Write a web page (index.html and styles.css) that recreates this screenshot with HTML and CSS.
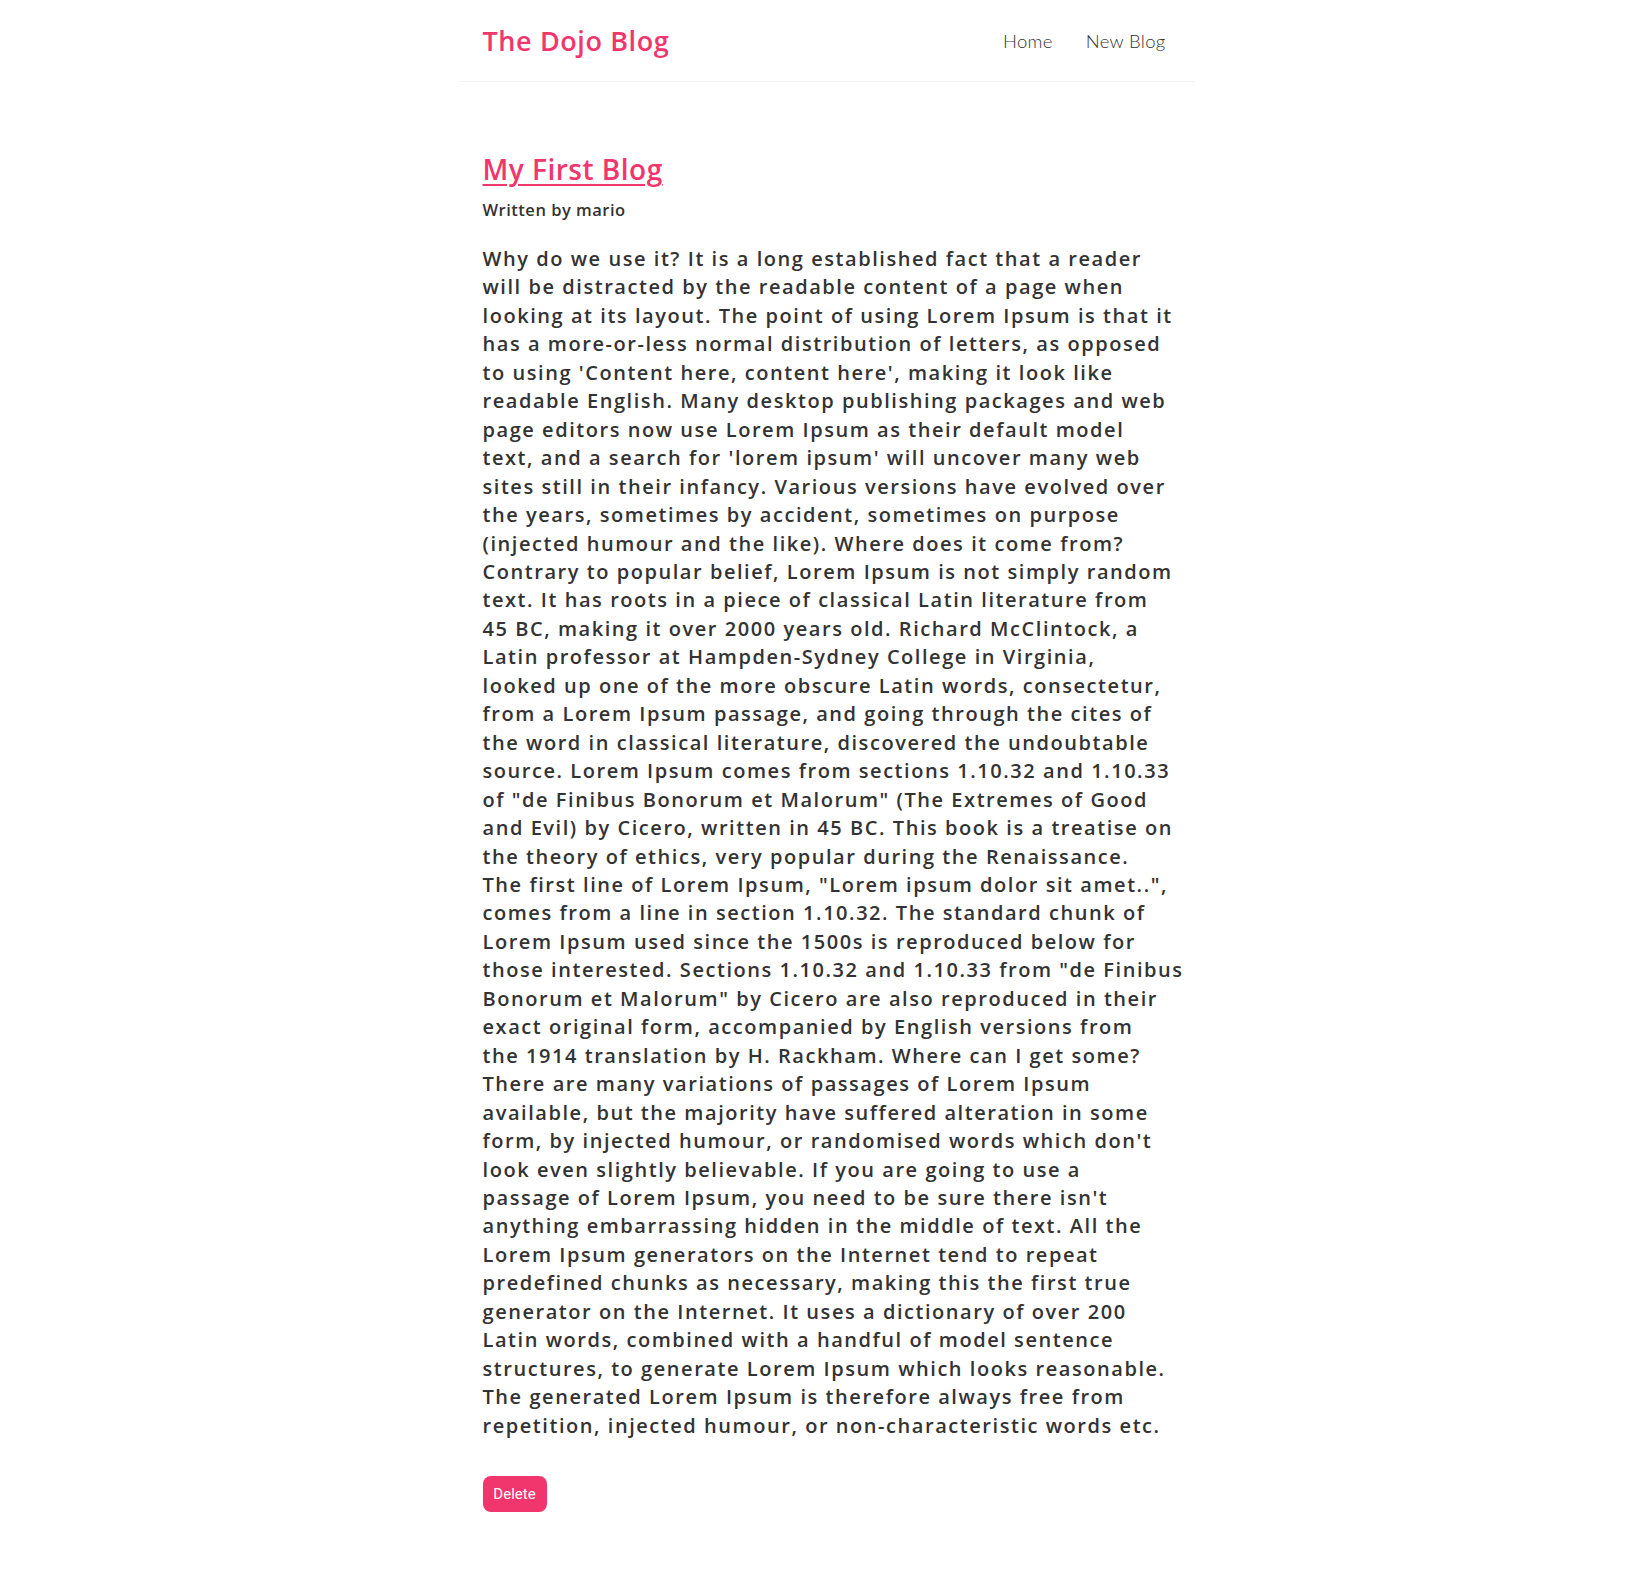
FILE: index.html
```html
<!DOCTYPE html>
<html lang="en">
<head>
<meta charset="utf-8">
<title>The Dojo Blog</title>
<link rel="stylesheet" href="styles.css">
</head>
<body>
<div class="app">
  <nav class="navbar">
    <h1 class="brand">The Dojo Blog</h1>
    <div class="links">
      <a href="#">Home</a>
      <a href="#">New Blog</a>
    </div>
  </nav>
  <div class="content">
    <article class="blog-details">
      <h2><a href="#">My First Blog</a></h2>
      <p class="author">Written by mario</p>
      <div class="body">Why do we use it? It is a long established fact that a reader
will be distracted by the readable content of a page when
looking at its layout. The point of using Lorem Ipsum is that it
has a more-or-less normal distribution of letters, as opposed
to using 'Content here, content here', making it look like
readable English. Many desktop publishing packages and web
page editors now use Lorem Ipsum as their default model
text, and a search for 'lorem ipsum' will uncover many web
sites still in their infancy. Various versions have evolved over
the years, sometimes by accident, sometimes on purpose
(injected humour and the like). Where does it come from?
Contrary to popular belief, Lorem Ipsum is not simply random
text. It has roots in a piece of classical Latin literature from
45 BC, making it over 2000 years old. Richard McClintock, a
Latin professor at Hampden-Sydney College in Virginia,
looked up one of the more obscure Latin words, consectetur,
from a Lorem Ipsum passage, and going through the cites of
the word in classical literature, discovered the undoubtable
source. Lorem Ipsum comes from sections 1.10.32 and 1.10.33
of "de Finibus Bonorum et Malorum" (The Extremes of Good
and Evil) by Cicero, written in 45 BC. This book is a treatise on
the theory of ethics, very popular during the Renaissance.
The first line of Lorem Ipsum, "Lorem ipsum dolor sit amet..",
comes from a line in section 1.10.32. The standard chunk of
Lorem Ipsum used since the 1500s is reproduced below for
those interested. Sections 1.10.32 and 1.10.33 from "de Finibus
Bonorum et Malorum" by Cicero are also reproduced in their
exact original form, accompanied by English versions from
the 1914 translation by H. Rackham. Where can I get some?
There are many variations of passages of Lorem Ipsum
available, but the majority have suffered alteration in some
form, by injected humour, or randomised words which don't
look even slightly believable. If you are going to use a
passage of Lorem Ipsum, you need to be sure there isn't
anything embarrassing hidden in the middle of text. All the
Lorem Ipsum generators on the Internet tend to repeat
predefined chunks as necessary, making this the first true
generator on the Internet. It uses a dictionary of over 200
Latin words, combined with a handful of model sentence
structures, to generate Lorem Ipsum which looks reasonable.
The generated Lorem Ipsum is therefore always free from
repetition, injected humour, or non-characteristic words etc.</div>
      <button class="delete">Delete</button>
    </article>
  </div>
</div>
</body>
</html>
```

FILE: styles.css
```css
* {
  margin: 0;
  box-sizing: border-box;
}

body {
  margin: 0;
  padding-left: 16px;
  background: #ffffff;
  color: #333333;
  font-family: "Open Sans", "Lato", sans-serif;
}

.app {
  width: 735px;
  margin: 0 auto;
}

.navbar {
  display: flex;
  align-items: center;
  padding: 24px 23px;
  height: 82px;
  border-bottom: 1px solid #f2f2f2;
}

.brand {
  font-size: 27px;
  font-weight: 600;
  color: #f1356d;
  letter-spacing: 0.6px;
}

.links {
  margin-left: auto;
  display: flex;
  gap: 33px;
  padding-right: 6px;
}

.links a {
  font-family: "Lato", sans-serif;
  font-size: 18.5px;
  font-weight: 300;
  color: #333333;
  text-decoration: none;
  letter-spacing: 0.3px;
}

.content {
  padding: 70px 23px 40px;
}

.blog-details h2 {
  font-size: 28px;
  font-weight: 600;
  line-height: 34px;
  letter-spacing: 0.5px;
}

.blog-details h2 a {
  color: #f1356d;
  text-decoration: underline;
  text-underline-offset: 4px;
  text-decoration-thickness: 2px;
}

.author {
  margin-top: 12px;
  font-size: 16.5px;
  font-weight: 600;
  color: #333333;
  letter-spacing: 0.5px;
}

.body {
  margin-top: 24px;
  font-size: 20px;
  font-weight: 600;
  line-height: 28.46px;
  letter-spacing: 1.55px;
  white-space: pre;
  color: #333333;
}

.delete {
  margin-top: 36px;
  display: block;
  width: 64px;
  height: 36px;
  border: none;
  border-radius: 8px;
  background: #f1356d;
  color: #ffffff;
  font-family: "Roboto", sans-serif;
  font-size: 15px;
  padding: 0;
}
```
